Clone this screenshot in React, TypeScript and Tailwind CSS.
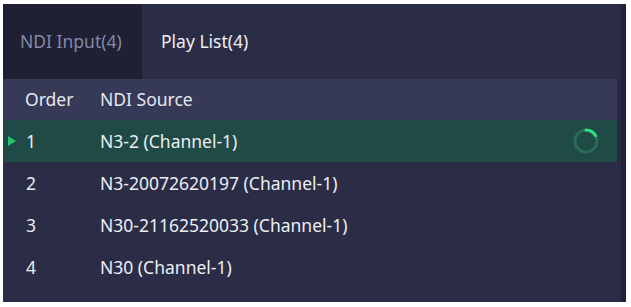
import React from "react";

const rows = [
  { order: "1", name: "N3-2 (Channel-1)", active: true },
  { order: "2", name: "N3-20072620197 (Channel-1)" },
  { order: "3", name: "N30-21162520033 (Channel-1)" },
  { order: "4", name: "N30 (Channel-1)" },
];

const Spinner = () => (
  <svg width="28" height="28" viewBox="0 0 28 28">
    <circle cx="14" cy="14" r="11" fill="none" stroke="#2f7a5c" strokeWidth="3" opacity="0.7" />
    <path d="M14 3 A11 11 0 0 1 23.5 8.5" fill="none" stroke="#2ee07f" strokeWidth="3.2" strokeLinecap="round" />
  </svg>
);

const App = () => {
  return (
    <div className="w-[631px] h-[307px] bg-white pt-[4px] pl-[3px]" style={{ fontFamily: '"Noto Sans", "Open Sans", sans-serif' }}>
      <div className="flex w-[623px] h-[298px] bg-[#2b2d46]">
        <div className="flex flex-col w-[614px]">
          <div className="flex h-[75px] items-center text-[17.5px]">
            <div className="flex items-center h-full w-[139px] pl-[17px] bg-[#1f2033] text-[#8489a8]">NDI Input(4)</div>
            <div className="pl-[19px] text-[#eeeef5]">Play List(4)</div>
          </div>
          <div className="flex items-center h-[41px] bg-[#363a57] text-[17.5px] text-[#e6e7f0]">
            <div className="w-[97px] pl-[22px]">Order</div>
            <div>NDI Source</div>
          </div>
          {rows.map((r) => (
            <div
              key={r.order}
              className={`flex items-center h-[42px] text-[17.5px] text-[#eceef4] ${r.active ? "bg-[#204a45]" : ""}`}
            >
              <div className="relative w-[97px] pl-[23px]">
                {r.active && (
                  <span className="absolute left-[5px] top-1/2 -translate-y-1/2 w-0 h-0 border-y-[5px] border-y-transparent border-l-[8px] border-l-[#23c46e]" />
                )}
                {r.order}
              </div>
              <div className="flex-1">{r.name}</div>
              {r.active && (
                <div className="pr-[17px] flex items-center">
                  <Spinner />
                </div>
              )}
            </div>
          ))}
        </div>
        <div className="flex w-[9px]">
          <div className="w-[4px] bg-[#2a2b42]" />
          <div className="w-[5px] bg-[#21223a]" />
        </div>
      </div>
    </div>
  );
};

export default App;
